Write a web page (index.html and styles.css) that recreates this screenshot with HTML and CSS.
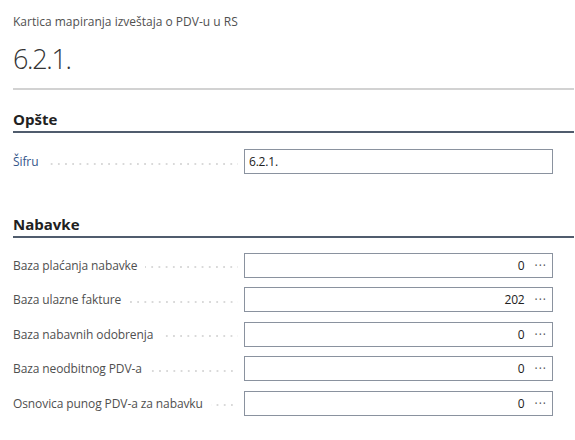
FILE: index.html
```html
<!DOCTYPE html>
<html lang="sr">
<head>
<meta charset="utf-8">
<title>Kartica mapiranja izveštaja o PDV-u u RS</title>
<link rel="stylesheet" href="styles.css">
</head>
<body>
<div class="page">
  <div class="caption">Kartica mapiranja izveštaja o PDV-u u RS</div>
  <h1 class="title">6.2.1.</h1>
  <div class="title-rule"></div>

  <section class="group">
    <h2 class="group-head">Opšte</h2>
    <div class="fields">
      <div class="field">
        <div class="label"><span class="label-text accent">Šifru</span><span class="leader"></span></div>
        <div class="box"><span class="value left">6.2.1.</span></div>
      </div>
    </div>
  </section>

  <section class="group group-second">
    <h2 class="group-head">Nabavke</h2>
    <div class="fields rows">
      <div class="field">
        <div class="label"><span class="label-text">Baza plaćanja nabavke</span><span class="leader"></span></div>
        <div class="box"><span class="value">0</span><span class="more">···</span></div>
      </div>
      <div class="field">
        <div class="label"><span class="label-text">Baza ulazne fakture</span><span class="leader"></span></div>
        <div class="box"><span class="value">202</span><span class="more">···</span></div>
      </div>
      <div class="field">
        <div class="label"><span class="label-text">Baza nabavnih odobrenja</span><span class="leader"></span></div>
        <div class="box"><span class="value">0</span><span class="more">···</span></div>
      </div>
      <div class="field">
        <div class="label"><span class="label-text">Baza neodbitnog PDV-a</span><span class="leader"></span></div>
        <div class="box"><span class="value">0</span><span class="more">···</span></div>
      </div>
      <div class="field">
        <div class="label"><span class="label-text">Osnovica punog PDV-a za nabavku</span><span class="leader"></span></div>
        <div class="box"><span class="value">0</span><span class="more">···</span></div>
      </div>
    </div>
  </section>
</div>
</body>
</html>
```

FILE: styles.css
```css
html, body {
  margin: 0;
  padding: 0;
  background: #ffffff;
}

body {
  font-family: "Open Sans", "Noto Sans", "Liberation Sans", sans-serif;
  color: #212121;
}

.page {
  padding: 14px 1px 0 13px;
}

.caption {
  font-size: 12px;
  line-height: 16px;
  color: #505050;
}

.title {
  margin: 12px 0 0 0;
  font-size: 27px;
  line-height: 34px;
  font-weight: 300;
  color: #333333;
  letter-spacing: -1.3px;
}

.title-rule {
  margin-top: 12px;
  height: 2px;
  background: #d2d2d2;
}

.group {
  margin-top: 18px;
}

.group-second {
  margin-top: 38px;
}

.group-head {
  margin: 0;
  font-size: 15px;
  line-height: 22px;
  font-weight: 700;
  color: #212121;
  padding-bottom: 1px;
  border-bottom: 2px solid #505c6d;
}

.fields {
  display: flex;
  flex-direction: column;
  gap: 9px;
  padding-top: 16px;
}

.rows {
  padding-top: 15px;
}

.field {
  display: grid;
  grid-template-columns: 225px 309px;
  column-gap: 6px;
  align-items: center;
  height: 25.5px;
}

.label {
  display: flex;
  align-items: center;
  min-width: 0;
}

.label-text {
  font-size: 12px;
  color: #4f4f4f;
  white-space: nowrap;
  padding-right: 8px;
  letter-spacing: -0.1px;
}

.label-text.accent {
  color: #34558a;
}

.leader {
  flex: 1;
  height: 12px;
  margin-top: 4px;
  background-image: linear-gradient(to right, #d9d9d9 1.6px, transparent 1.6px);
  background-size: 7.2px 1.6px;
  background-repeat: repeat-x;
  background-position: right center;
}

.box {
  height: 25px;
  box-sizing: border-box;
  border: 1px solid #8a929f;
  display: flex;
  align-items: center;
  justify-content: flex-end;
  padding: 0 5px 0 4px;
  background: #ffffff;
}

.value {
  font-size: 12px;
  color: #212121;
  letter-spacing: -0.2px;
}

.value.left {
  margin-right: auto;
}

.more {
  margin-left: 10px;
  font-size: 12px;
  color: #555555;
  letter-spacing: 1px;
}
```
